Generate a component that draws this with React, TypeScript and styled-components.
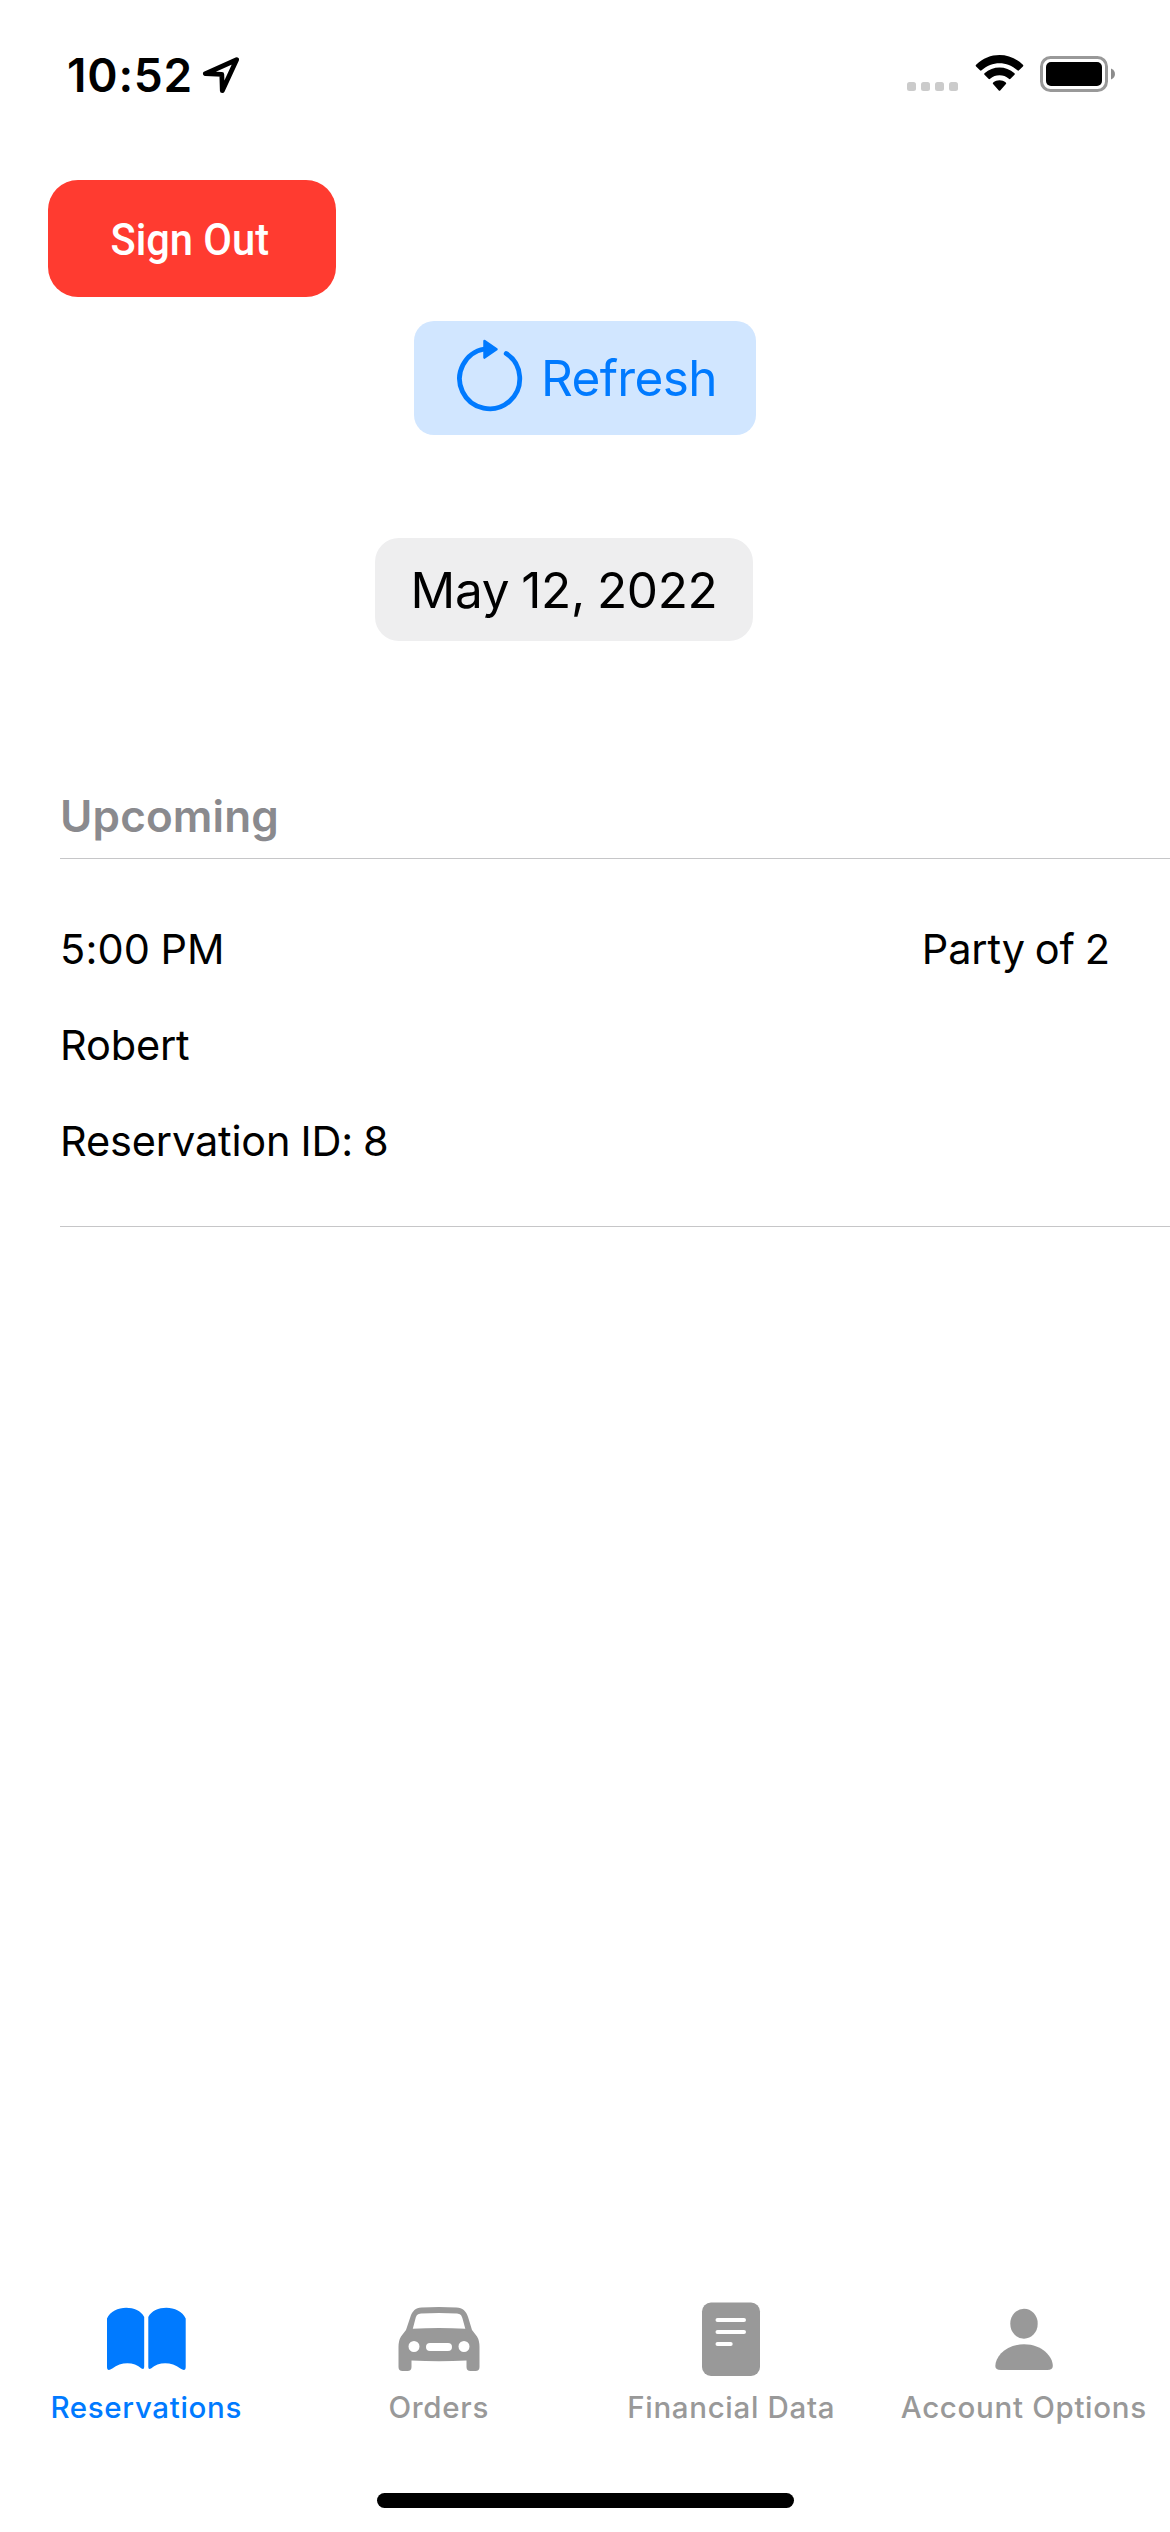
import React from "react";
import styled, { createGlobalStyle } from "styled-components";

const BLUE = "#007aff";
const GREY = "#999999";

const GlobalStyle = createGlobalStyle`
  * { box-sizing: border-box; }
  body { margin: 0; background: #fff; }
  button { border: 0; margin: 0; padding: 0; background: none; font: inherit; color: inherit; }
  svg { display: block; flex: none; }
`;

const Screen = styled.div`
  width: 1170px;
  height: 2532px;
  display: flex;
  flex-direction: column;
  background: #fff;
  color: #000;
  font-family: Inter, "Liberation Sans", sans-serif;
  overflow: hidden;
  white-space: nowrap;
`;

const StatusBar = styled.header`
  height: 150px;
  flex: none;
  display: flex;
  align-items: center;
  justify-content: space-between;
  padding: 0 55px 0 67px;
`;

const StatusGroup = styled.div<{ $gap: number }>`
  display: flex;
  align-items: center;
  gap: ${(p) => p.$gap}px;
`;

const Clock = styled.span`
  width: 126px;
  font-size: 46px;
  font-weight: 600;
  line-height: 60px;
  letter-spacing: 0.8px;
`;

const SignOutButton = styled.button`
  width: 288px;
  height: 117px;
  flex: none;
  margin: 30px 0 0 48px;
  padding: 2px 4px 0 0;
  border-radius: 30px;
  background: #ff3b30;
  color: #fff;
  display: flex;
  align-items: center;
  justify-content: center;
  font-family: Roboto, sans-serif;
  font-size: 45px;
  font-weight: 500;
`;

const CondensedLabel = styled.span`
  transform: scaleX(0.925);
`;

const RefreshButton = styled.button`
  width: 342px;
  height: 114px;
  flex: none;
  align-self: center;
  margin-top: 24px;
  padding-left: 42px;
  border-radius: 20px;
  background: #d1e6ff;
  color: ${BLUE};
  display: flex;
  align-items: center;
  gap: 13px;
  font-size: 49.5px;
  letter-spacing: -0.65px;
`;

const DateRow = styled.div`
  display: flex;
  justify-content: center;
  margin-top: 103px;
  padding-right: 42px;
`;

const DateButton = styled.button`
  width: 378px;
  height: 103px;
  border-radius: 24px;
  background: #eeeeef;
  color: #000;
  font-size: 49.5px;
  letter-spacing: -0.33px;
  word-spacing: -1.5px;
`;

const ReservationList = styled.main`
  flex: 1;
  margin-top: 133px;
  padding-left: 60px;
`;

const SectionTitle = styled.h2`
  margin: 0;
  height: 85px;
  border-bottom: 1px solid #c6c6c8;
  color: #8a8a8e;
  font-size: 44px;
  font-weight: 600;
  line-height: 84px;
  letter-spacing: 0.15px;
`;

const Reservation = styled.article`
  padding: 42px 60px 37px 0;
  border-bottom: 1px solid #c6c6c8;
`;

const Line = styled.div`
  display: flex;
  justify-content: space-between;
  height: 96px;
  font-size: 41.5px;
  line-height: 96px;
  letter-spacing: -0.15px;
  word-spacing: -1.5px;
`;

const Time = styled.time`
  letter-spacing: 0.15px;
`;

const TabBar = styled.nav`
  flex: none;
  display: grid;
  grid-template-columns: repeat(4, 1fr);
  height: 196px;
`;

const Tab = styled.button<{ $active?: boolean }>`
  display: flex;
  flex-direction: column;
  align-items: center;
  justify-content: flex-start;
  gap: 6px;
  color: ${(p) => (p.$active ? BLUE : GREY)};
  font-size: 29.5px;
  font-weight: 500;
  line-height: 40px;
  letter-spacing: 0.68px;
`;

const HomeIndicator = styled.div`
  flex: none;
  align-self: center;
  width: 417px;
  height: 15px;
  margin-bottom: 24px;
  border-radius: 8px;
  background: #000;
`;

const LocationIcon = () => (
  <svg width="40" height="40" viewBox="201 55 40 40">
    <path d="M236.6 59.7 205.4 73.7 221.8 74.3 222.3 90.7Z" fill="none" stroke="#000" strokeWidth="4.8" strokeLinejoin="round" />
  </svg>
);

const SignalDots = () => (
  <svg width="52" height="40" viewBox="906 55 52 40">
    {[907, 921, 935, 949].map((x) => (
      <rect key={x} x={x} y="82" width="9" height="9" rx="2.5" fill="#cbcbcb" />
    ))}
  </svg>
);

const WifiIcon = () => (
  <svg width="49" height="40" viewBox="974.5 55 49 40">
    <path d="M979.5 70.3 975.6 66.4C975 65.8 975 65.3 975.6 64.7 988.9 51.8 1009.1 51.8 1022.4 64.7 1023 65.3 1023 65.8 1022.4 66.4L1018.5 70.3Q1017.7 71.1 1016.9 70.3C1006.6 60.8 991.4 60.8 981.1 70.3Q980.3 71.1 979.5 70.3Z" />
    <path d="M988 78.8 984 74.8Q983.2 74 984 73.2C992.6 65.5 1005.4 65.5 1014 73.2Q1014.8 74 1014 74.8L1010 78.8Q1009.2 79.6 1008.4 78.8C1003 74.2 995 74.2 989.6 78.8Q988.8 79.6 988 78.8Z" />
    <path d="M998.3 90.4 992.6 84.1Q991.8 83.2 992.7 82.5C996.4 79.6 1001.6 79.6 1005.3 82.5Q1006.2 83.2 1005.4 84.1L999.7 90.4Q999 91.2 998.3 90.4Z" />
  </svg>
);

const BatteryIcon = () => (
  <svg width="75" height="40" viewBox="1040 55 75 40">
    <rect x="1041.5" y="57.5" width="65" height="33" rx="9" fill="none" stroke="#999" strokeWidth="3" />
    <rect x="1046" y="62" width="56" height="24" rx="5" />
    <path d="M1111 68.5C1116.3 70.5 1116.3 77.5 1111 79.5Z" fill="#8c8c8c" />
  </svg>
);

const RefreshIcon = () => (
  <svg width="72" height="78" viewBox="456 339 72 78">
    <path d="M506.2 353.5A30.1 30.1 0 1 1 484.5 349" fill="none" stroke={BLUE} strokeWidth="4.8" strokeLinecap="round" />
    <path d="M484.5 341 496.5 349.2 484.5 357.6Z" fill={BLUE} stroke={BLUE} strokeWidth="2.5" strokeLinejoin="round" />
  </svg>
);

const BookIcon = () => (
  <svg width="88" height="84" viewBox="102 2297 88 84" fill="currentColor">
    <path d="M107 2318.500C113 2304.500 138 2304.500 144.200 2317V2367Q144.200 2370 141.500 2368.600C134 2361.500 121 2361.500 112.300 2368.600Q107 2372 107 2367Z" />
    <path d="M148.300 2317C154.500 2304.500 179.500 2304.500 185.700 2318.500V2367Q185.700 2372 180.400 2368.600C171.500 2361.500 158.500 2361.500 151 2368.600Q148.300 2370 148.300 2367Z" />
  </svg>
);

const CarIcon = () => (
  <svg width="88" height="84" viewBox="394.5 2297 88 84" fill="currentColor">
    <path
      fillRule="evenodd"
      d="M405.500 2330 409.700 2317.500C412 2310.500 415 2308 421 2307.500Q438.500 2306.300 456 2307.500C462 2308 465.500 2310.500 467.700 2317.500L471.500 2330 476.500 2336.500Q479 2340.500 479 2347V2367Q479 2371 475 2371H470Q466 2371 466 2367V2360.500Q438.500 2362 411 2360.500V2367Q411 2371 407 2371H402Q398 2371 398 2367V2347Q398 2340.500 400.500 2336.500ZM412.300 2328.700Q438.500 2327.300 464.800 2328.700L462 2318.500C461 2314.800 459.500 2313.800 456.500 2313.500Q438.500 2312.300 420.500 2313.500C417.500 2313.800 416 2314.800 415 2318.500ZM413.500 2341A5.500 5.500 0 1 0 413.500 2352 5.500 5.500 0 1 0 413.500 2341ZM463.500 2341A5.500 5.500 0 1 0 463.500 2352 5.500 5.500 0 1 0 463.500 2341ZM429.500 2343A4 4 0 0 0 429.500 2351H447.500A4 4 0 0 0 447.500 2343Z"
    />
  </svg>
);

const DocumentIcon = () => (
  <svg width="88" height="84" viewBox="687 2297 88 84" fill="currentColor">
    <rect x="702" y="2302.5" width="58" height="73.5" rx="9" />
    <g stroke="#fff" strokeWidth="4" strokeLinecap="round">
      <path d="M717.5 2320H744M717.5 2332H744M717.5 2344H730.7" />
    </g>
  </svg>
);

const PersonIcon = () => (
  <svg width="88" height="84" viewBox="979.7 2297 88 84" fill="currentColor">
    <ellipse cx="1023.7" cy="2323.7" rx="13.7" ry="15" />
    <path d="M995 2366C995 2357 1005 2344.300 1023.700 2344.300S1052.500 2357 1052.500 2366Q1052.500 2370 1047 2370H1000.500Q995 2370 995 2366Z" />
  </svg>
);

const tabs = [
  { label: "Reservations", Icon: BookIcon },
  { label: "Orders", Icon: CarIcon },
  { label: "Financial Data", Icon: DocumentIcon },
  { label: "Account Options", Icon: PersonIcon },
];

export default function App() {
  return (
    <>
      <GlobalStyle />
      <Screen>
        <StatusBar>
          <StatusGroup $gap={8}>
            <Clock>10:52</Clock>
            <LocationIcon />
          </StatusGroup>
          <StatusGroup $gap={16.5}>
            <SignalDots />
            <WifiIcon />
            <BatteryIcon />
          </StatusGroup>
        </StatusBar>
        <SignOutButton>
          <CondensedLabel>Sign Out</CondensedLabel>
        </SignOutButton>
        <RefreshButton>
          <RefreshIcon />
          Refresh
        </RefreshButton>
        <DateRow>
          <DateButton>May 12, 2022</DateButton>
        </DateRow>
        <ReservationList>
          <SectionTitle>Upcoming</SectionTitle>
          <Reservation>
            <Line>
              <Time>5:00 PM</Time>
              <span>Party of 2</span>
            </Line>
            <Line>Robert</Line>
            <Line>Reservation ID: 8</Line>
          </Reservation>
        </ReservationList>
        <TabBar>
          {tabs.map(({ label, Icon }, i) => (
            <Tab key={label} $active={i === 0}>
              <Icon />
              <span>{label}</span>
            </Tab>
          ))}
        </TabBar>
        <HomeIndicator />
      </Screen>
    </>
  );
}
